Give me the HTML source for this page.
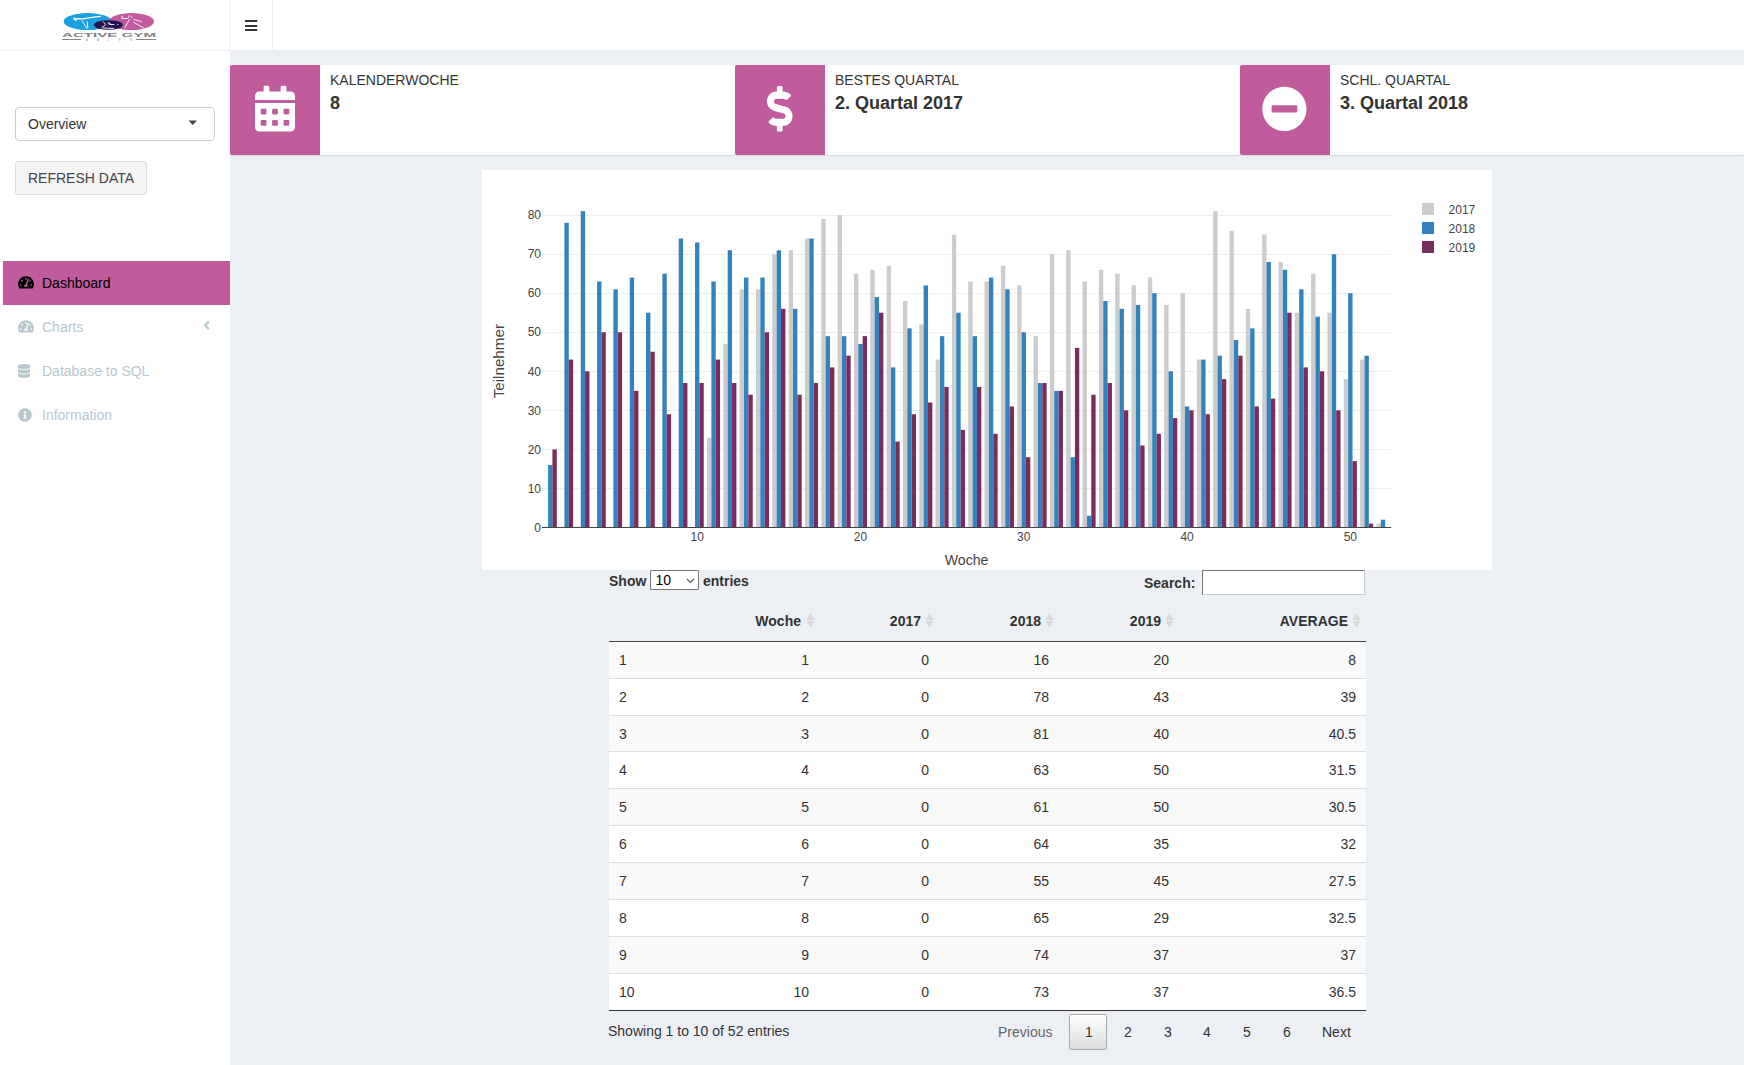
<!DOCTYPE html>
<html><head><meta charset="utf-8">
<style>
*{box-sizing:border-box;margin:0;padding:0}
html,body{width:1744px;height:1065px;overflow:hidden}
body{font-family:"Liberation Sans",sans-serif;font-size:14px;line-height:16px;color:#333;background:#ecf0f5;position:relative}
.abs{position:absolute}
#hdr{left:0;top:0;width:1744px;height:50px;background:#fff}
#logo{left:0;top:0;width:230px;height:51px;background:#fff;border-bottom:1px solid #eeeeee}
#toggle{left:229px;top:0;width:44px;height:50px;border-left:1px solid #eee;border-right:1px solid #eee}
#side{left:0;top:51px;width:230px;height:1014px;background:#fff}
.sel{left:15px;top:107px;width:200px;height:34px;border:1px solid #ccc;border-radius:4px;background:#fff}
.sel span{position:absolute;left:12px;top:8px;color:#333}
.btn{left:15px;top:161px;width:132px;height:34px;border:1px solid #ddd;border-radius:3px;background:#f4f4f4}
.btn span{position:absolute;left:12px;top:8px;color:#444}
.menu{left:0;width:230px;height:44px}
.menu span{position:absolute;left:42px;top:14px;color:#b8c7ce}
.menu.act{left:3px;width:227px;background:#c05b9c}
.menu.act span{left:39px;color:#000}
.menu svg{position:absolute}
.ib{top:65px;height:90px;background:#fff;box-shadow:0 1px 1px rgba(0,0,0,.1);border-radius:2px}
.ib .ic{position:absolute;left:0;top:0;width:90px;height:90px;background:#c05b9c;border-radius:2px 0 0 2px}
.ib .ic svg{position:absolute;left:0;top:0}
.ib .t{position:absolute;left:100px;top:7px;font-size:14px;color:#333;text-transform:uppercase}
.ib .v{position:absolute;left:100px;top:28px;font-size:18px;line-height:20px;font-weight:bold;color:#333}
#chart{left:482px;top:170px;width:1010px;height:400px;background:#fff}
.tr{left:609px;width:757px}
.td{color:#333;white-space:nowrap}
.th{font-weight:bold;color:#333;top:613px;white-space:nowrap}
.sort{position:absolute;width:9px;height:16px}
.pg{top:1024px;color:#333}
</style></head><body>
<div id="hdr" class="abs"></div>
<div id="logo" class="abs">
<svg class="abs" style="left:0;top:0" width="230" height="50">
<ellipse cx="87.7" cy="21.6" rx="24" ry="8.5" fill="#1a9fe0"/>
<ellipse cx="131.5" cy="21.6" rx="22.5" ry="8.5" fill="#c25a9e"/>
<ellipse cx="108.5" cy="25" rx="14.5" ry="4.8" fill="#22124f"/>
<g stroke="#fff" fill="none" stroke-linecap="round" stroke-linejoin="round">
<path stroke-width="1.3" d="M74 19 L78 18.6 L83 18.8 L90 17.6 L100.4 16.4"/>
<path stroke-width="1.4" d="M74.5 18 L76 20.5"/>
<path stroke-width="0.9" d="M82.1 20.7 L86.7 28.2 M87.2 21.6 L87.8 27.9"/>
<path stroke-width="0.9" d="M103.2 21.7 L105.7 24.5 L101.8 27.7 M103 28 L113.9 28.4 M110 24.5 L113.9 24.5"/>
<circle cx="108.9" cy="23.4" r="0.9" stroke-width="0.7"/>
<circle cx="117.8" cy="24.5" r="0.3" fill="#fff" stroke-width="0.4"/>
<path stroke-width="0.9" d="M122.1 16 L122.1 18.5 L127.8 18.5 L129.5 15.6 M129.5 19.5 L124.9 27.4 M133.8 22.4 L143.4 27.7 M133.8 19.5 L141.6 21.7"/>
<circle cx="131.7" cy="17" r="0.4" fill="#fff" stroke-width="0.4"/>
</g>
<text x="62" y="37" font-family="Liberation Sans, sans-serif" font-weight="bold" font-size="5.6" fill="#7d7d7d" textLength="94" lengthAdjust="spacingAndGlyphs">ACTIVE GYM</text>
<rect x="62" y="39" width="19" height="1" fill="#888"/>
<rect x="136" y="39" width="20" height="1" fill="#888"/>
<text x="86" y="41" font-family="Liberation Sans, sans-serif" font-size="3" fill="#999" textLength="46" lengthAdjust="spacing">AALEN</text>
</svg>
</div>
<div id="toggle" class="abs">
<svg class="abs" style="left:14px;top:0" width="14" height="50"><rect x="1" y="20" width="12.25" height="2" rx="0.5" fill="#333"/><rect x="1" y="25" width="12.25" height="2" rx="0.5" fill="#333"/><rect x="1" y="29" width="12.25" height="2" rx="0.5" fill="#333"/></svg>
</div>
<div id="side" class="abs"></div>
<div class="abs sel"><span>Overview</span><svg class="abs" style="left:172px;top:12px" width="10" height="6"><path d="M0.5 0.5 L9 0.5 L4.75 5 Z" fill="#444"/></svg></div>
<div class="abs btn"><span>REFRESH DATA</span></div>
<div class="abs menu act" style="top:261px"><svg style="left:15px;top:15px" width="16" height="14" viewBox="0 0 576 512"><path transform="translate(0,-20)" fill="#000" d="M288 32C128.94 32 0 160.94 0 320c0 52.8 14.25 102.26 39.06 144.8 5.610 9.62 16.3 15.2 27.44 15.2h443c11.14 0 21.83-5.58 27.44-15.2C561.750 422.26 576 372.8 576 320c0-159.06-128.94-288-288-288zm0 64c14.71 0 26.58 10.13 30.32 23.65-1.11 2.26-2.64 4.23-3.45 6.67l-9.22 27.67c-5.13 3.49-10.97 6.01-17.640 6.01-17.67 0-32-14.33-32-32S270.33 96 288 96zM96 384c-17.67 0-32-14.33-32-32s14.33-32 32-32 32 14.33 32 32-14.33 32-32 32zm48-160c-17.67 0-32-14.33-32-32s14.33-32 32-32 32 14.33 32 32-14.33 32-32 32zm246.77-72.41l-61.33 184C343.13 347.33 352 364.54 352 384c0 11.72-3.38 22.55-8.88 32H232.88c-5.5-9.45-8.88-20.28-8.88-32 0-33.94 26.5-61.43 59.9-63.59l61.34-184.01c4.17-12.56 17.73-19.45 30.36-15.17 12.57 4.19 19.35 17.79 15.17 30.36zm14.66 57.2l15.52-46.55c3.47-1.29 7.13-2.23 11.05-2.230 17.67 0 32 14.33 32 32s-14.33 32-32 32c-11.38-.01-20.89-6.3-26.57-15.22zM480 384c-17.67 0-32-14.33-32-32s14.33-32 32-32 32 14.33 32 32-14.33 32-32 32z"/></svg><span>Dashboard</span></div>
<div class="abs menu" style="top:305px"><svg style="left:18px;top:15px" width="16" height="14" viewBox="0 0 576 512"><path transform="translate(0,-20)" fill="#b8c7ce" d="M288 32C128.94 32 0 160.94 0 320c0 52.8 14.25 102.26 39.06 144.8 5.610 9.62 16.3 15.2 27.44 15.2h443c11.14 0 21.830-5.58 27.44-15.2C561.75 422.26 576 372.8 576 320c0-159.06-128.94-288-288-288zm0 64c14.71 0 26.58 10.13 30.32 23.65-1.11 2.26-2.64 4.23-3.45 6.67l-9.22 27.67c-5.13 3.49-10.97 6.01-17.64 6.01-17.67 0-32-14.33-32-32S270.33 96 288 96zM96 384c-17.67 0-32-14.33-32-32s14.33-32 32-32 32 14.33 32 32-14.33 32-32 32zm48-160c-17.67 0-32-14.33-32-32s14.33-32 32-32 32 14.33 32 32-14.33 32-32 32zm246.77-72.41l-61.33 184C343.13 347.33 352 364.54 352 384c0 11.72-3.38 22.55-8.88 32H232.88c-5.5-9.45-8.88-20.28-8.88-32 0-33.94 26.5-61.43 59.9-63.59l61.34-184.01c4.17-12.56 17.73-19.45 30.36-15.17 12.57 4.19 19.35 17.79 15.17 30.36zm14.66 57.2l15.52-46.55c3.47-1.29 7.13-2.23 11.05-2.23 17.67 0 32 14.33 32 32s-14.33 32-32 32c-11.38-.01-20.89-6.3-26.57-15.22zM480 384c-17.67 0-32-14.33-32-32s14.33-32 32-32 32 14.33 32 32-14.33 32-32 32z"/></svg><span>Charts</span>
<svg style="left:203px;top:13.3px" width="7.2" height="14.4" viewBox="0 0 256 512"><path fill="#b8c7ce" d="M31.7 239l136-136c9.4-9.4 24.6-9.4 33.9 0l22.6 22.6c9.4 9.4 9.4 24.6 0 33.9L127.9 256l96.4 96.4c9.4 9.4 9.4 24.6 0 33.9L201.7 409c-9.4 9.4-24.6 9.4-33.9 0l-136-136c-9.5-9.4-9.5-24.6-.1-34z"/></svg></div>
<div class="abs menu" style="top:349px"><svg style="left:18px;top:15px" width="12.25" height="14" viewBox="0 0 448 512"><path fill="#b8c7ce" d="M448 73.143v45.714C448 159.143 347.667 192 224 192S0 159.143 0 118.857V73.143C0 32.857 100.333 0 224 0s224 32.857 224 73.143zM448 176v102.857C448 319.143 347.667 352 224 352S0 319.143 0 278.857V176c48.125 33.143 136.208 48.572 224 48.572S399.874 209.143 448 176zm0 160v102.857C448 479.143 347.667 512 224 512S0 479.143 0 438.857V336c48.125 33.143 136.208 48.572 224 48.572S399.874 369.143 448 336z"/></svg><span>Database to SQL</span></div>
<div class="abs menu" style="top:393px"><svg style="left:18px;top:15px" width="14" height="14" viewBox="0 0 512 512"><path fill="#b8c7ce" d="M256 8C119.043 8 8 119.083 8 256c0 136.997 111.043 248 248 248s248-111.003 248-248C504 119.083 392.957 8 256 8zm0 110c23.196 0 42 18.804 42 42s-18.804 42-42 42-42-18.804-42-42 18.804-42 42-42zm56 254c0 6.627-5.373 12-12 12h-88c-6.627 0-12-5.373-12-12v-24c0-6.627 5.373-12 12-12h12v-64h-12c-6.627 0-12-5.373-12-12v-24c0-6.627 5.373-12 12-12h64c6.627 0 12 5.373 12 12v100h12c6.627 0 12 5.373 12 12v24z"/></svg><span>Information</span></div>

<div class="abs ib" style="left:230px;width:505px"><div class="ic"><svg width="90" height="90"><g transform="translate(25,20.8) scale(0.0893)"><path fill="#fff" d="M0 464c0 26.5 21.5 48 48 48h352c26.5 0 48-21.5 48-48V192H0v272zm320-196c0-6.6 5.4-12 12-12h40c6.6 0 12 5.4 12 12v40c0 6.6-5.4 12-12 12h-40c-6.6 0-12-5.4-12-12v-40zm0 128c0-6.6 5.4-12 12-12h40c6.6 0 12 5.4 12 12v40c0 6.6-5.4 12-12 12h-40c-6.6 0-12-5.4-12-12v-40zM192 268c0-6.6 5.4-12 12-12h40c6.6 0 12 5.4 12 12v40c0 6.6-5.4 12-12 12h-40c-6.6 0-12-5.4-12-12v-40zm0 128c0-6.6 5.4-12 12-12h40c6.6 0 12 5.4 12 12v40c0 6.6-5.4 12-12 12h-40c-6.6 0-12-5.4-12-12v-40zM64 268c0-6.6 5.4-12 12-12h40c6.6 0 12 5.4 12 12v40c0 6.6-5.4 12-12 12H76c-6.6 0-12-5.4-12-12v-40zm0 128c0-6.6 5.4-12 12-12h40c6.6 0 12 5.4 12 12v40c0 6.6-5.4 12-12 12H76c-6.6 0-12-5.4-12-12v-40zM400 64h-48V16c0-8.8-7.2-16-16-16h-32c-8.8 0-16 7.2-16 16v48H160V16c0-8.8-7.2-16-16-16h-32c-8.8 0-16 7.2-16 16v48H48C21.5 64 0 85.5 0 112v48h448v-48c0-26.5-21.5-48-48-48z"/></g></svg></div><div class="t">Kalenderwoche</div><div class="v">8</div></div>
<div class="abs ib" style="left:735px;width:505px"><div class="ic"><svg width="90" height="90"><g transform="translate(31.9,20.9) scale(0.0893)"><path fill="#fff" d="M209.2 233.4l-108-31.6C88.7 198.2 80 186.5 80 173.5c0-16.3 13.2-29.5 29.5-29.5h66.3c12.2 0 24.2 3.7 34.2 10.5 6.1 4.1 14.3 3.1 19.5-2l34.8-34c7.1-6.9 6.1-18.4-1.8-24.5C238 74.8 207.4 64.1 176 64V16c0-8.8-7.2-16-16-16h-32c-8.8 0-16 7.2-16 16v48h-2.5C45.8 64-5.4 118.7.5 183.6c4.2 46.1 39.4 83.6 83.8 96.6l102.5 30c12.5 3.7 21.2 15.3 21.2 28.3 0 16.3-13.2 29.5-29.5 29.5h-66.3C100 368 88 364.3 78 357.5c-6.1-4.1-14.3-3.1-19.5 2l-34.8 34c-7.1 6.9-6.1 18.4 1.8 24.5 24.5 19.2 55.1 29.9 86.5 30v48c0 8.8 7.2 16 16 16h32c8.8 0 16-7.2 16-16v-48.2c46.6-.9 90.3-28.6 105.7-72.7 21.5-61.6-14.6-124.8-72.5-141.7z"/></g></svg></div><div class="t">Bestes Quartal</div><div class="v">2. Quartal 2017</div></div>
<div class="abs ib" style="left:1240px;width:504px"><div class="ic"><svg width="90" height="90"><g transform="translate(21.6,21.1) scale(0.0891)"><path fill="#fff" d="M256 8C119 8 8 119 8 256s111 248 248 248 248-111 248-248S393 8 256 8zM124 296c-6.6 0-12-5.4-12-12v-56c0-6.6 5.4-12 12-12h264c6.6 0 12 5.4 12 12v56c0 6.6-5.4 12-12 12H124z"/></g></svg></div><div class="t">Schl. Quartal</div><div class="v">3. Quartal 2018</div></div>

<div id="chart" class="abs"></div>
<svg class="abs" style="left:482px;top:170px" width="1010" height="400" font-family="Liberation Sans, sans-serif" font-size="12" fill="#444"><line x1="60.10" x2="909.16" y1="318.50" y2="318.50" stroke="#eeeeee" stroke-width="1"/><line x1="60.10" x2="909.16" y1="279.50" y2="279.50" stroke="#eeeeee" stroke-width="1"/><line x1="60.10" x2="909.16" y1="240.50" y2="240.50" stroke="#eeeeee" stroke-width="1"/><line x1="60.10" x2="909.16" y1="201.50" y2="201.50" stroke="#eeeeee" stroke-width="1"/><line x1="60.10" x2="909.16" y1="162.50" y2="162.50" stroke="#eeeeee" stroke-width="1"/><line x1="60.10" x2="909.16" y1="123.50" y2="123.50" stroke="#eeeeee" stroke-width="1"/><line x1="60.10" x2="909.16" y1="84.50" y2="84.50" stroke="#eeeeee" stroke-width="1"/><line x1="60.10" x2="909.16" y1="45.50" y2="45.50" stroke="#eeeeee" stroke-width="1"/><rect x="66.09" y="295.02" width="4.35" height="62.48" fill="#3182bd"/><rect x="70.44" y="279.40" width="4.35" height="78.10" fill="#7b2c5f"/><rect x="82.41" y="52.91" width="4.35" height="304.59" fill="#3182bd"/><rect x="86.77" y="189.59" width="4.35" height="167.91" fill="#7b2c5f"/><rect x="98.74" y="41.19" width="4.35" height="316.31" fill="#3182bd"/><rect x="103.10" y="201.30" width="4.35" height="156.20" fill="#7b2c5f"/><rect x="115.07" y="111.49" width="4.35" height="246.01" fill="#3182bd"/><rect x="119.43" y="162.25" width="4.35" height="195.25" fill="#7b2c5f"/><rect x="131.40" y="119.30" width="4.35" height="238.20" fill="#3182bd"/><rect x="135.75" y="162.25" width="4.35" height="195.25" fill="#7b2c5f"/><rect x="147.73" y="107.58" width="4.35" height="249.92" fill="#3182bd"/><rect x="152.08" y="220.83" width="4.35" height="136.67" fill="#7b2c5f"/><rect x="164.05" y="142.73" width="4.35" height="214.77" fill="#3182bd"/><rect x="168.41" y="181.77" width="4.35" height="175.72" fill="#7b2c5f"/><rect x="180.38" y="103.68" width="4.35" height="253.82" fill="#3182bd"/><rect x="184.74" y="244.25" width="4.35" height="113.24" fill="#7b2c5f"/><rect x="196.71" y="68.53" width="4.35" height="288.97" fill="#3182bd"/><rect x="201.07" y="213.01" width="4.35" height="144.48" fill="#7b2c5f"/><rect x="213.04" y="72.44" width="4.35" height="285.06" fill="#3182bd"/><rect x="217.39" y="213.01" width="4.35" height="144.48" fill="#7b2c5f"/><rect x="225.01" y="267.69" width="4.35" height="89.81" fill="#cccccc"/><rect x="229.37" y="111.49" width="4.35" height="246.01" fill="#3182bd"/><rect x="233.72" y="189.59" width="4.35" height="167.91" fill="#7b2c5f"/><rect x="241.34" y="173.97" width="4.35" height="183.53" fill="#cccccc"/><rect x="245.69" y="80.25" width="4.35" height="277.25" fill="#3182bd"/><rect x="250.05" y="213.01" width="4.35" height="144.48" fill="#7b2c5f"/><rect x="257.67" y="119.30" width="4.35" height="238.20" fill="#cccccc"/><rect x="262.02" y="107.58" width="4.35" height="249.92" fill="#3182bd"/><rect x="266.38" y="224.73" width="4.35" height="132.77" fill="#7b2c5f"/><rect x="274.00" y="119.30" width="4.35" height="238.20" fill="#cccccc"/><rect x="278.35" y="107.58" width="4.35" height="249.92" fill="#3182bd"/><rect x="282.71" y="162.25" width="4.35" height="195.25" fill="#7b2c5f"/><rect x="290.32" y="84.15" width="4.35" height="273.35" fill="#cccccc"/><rect x="294.68" y="80.25" width="4.35" height="277.25" fill="#3182bd"/><rect x="299.03" y="138.82" width="4.35" height="218.68" fill="#7b2c5f"/><rect x="306.65" y="80.25" width="4.35" height="277.25" fill="#cccccc"/><rect x="311.01" y="138.82" width="4.35" height="218.68" fill="#3182bd"/><rect x="315.36" y="224.73" width="4.35" height="132.77" fill="#7b2c5f"/><rect x="322.98" y="68.53" width="4.35" height="288.97" fill="#cccccc"/><rect x="327.33" y="68.53" width="4.35" height="288.97" fill="#3182bd"/><rect x="331.69" y="213.01" width="4.35" height="144.48" fill="#7b2c5f"/><rect x="339.31" y="49.00" width="4.35" height="308.50" fill="#cccccc"/><rect x="343.66" y="166.15" width="4.35" height="191.34" fill="#3182bd"/><rect x="348.02" y="197.39" width="4.35" height="160.10" fill="#7b2c5f"/><rect x="355.64" y="45.10" width="4.35" height="312.40" fill="#cccccc"/><rect x="359.99" y="166.15" width="4.35" height="191.34" fill="#3182bd"/><rect x="364.35" y="185.68" width="4.35" height="171.82" fill="#7b2c5f"/><rect x="371.96" y="103.68" width="4.35" height="253.82" fill="#cccccc"/><rect x="376.32" y="173.97" width="4.35" height="183.53" fill="#3182bd"/><rect x="380.67" y="166.15" width="4.35" height="191.34" fill="#7b2c5f"/><rect x="388.29" y="99.77" width="4.35" height="257.73" fill="#cccccc"/><rect x="392.65" y="127.11" width="4.35" height="230.39" fill="#3182bd"/><rect x="397.00" y="142.73" width="4.35" height="214.77" fill="#7b2c5f"/><rect x="404.62" y="95.87" width="4.35" height="261.63" fill="#cccccc"/><rect x="408.97" y="197.39" width="4.35" height="160.10" fill="#3182bd"/><rect x="413.33" y="271.59" width="4.35" height="85.91" fill="#7b2c5f"/><rect x="420.95" y="131.01" width="4.35" height="226.49" fill="#cccccc"/><rect x="425.30" y="158.35" width="4.35" height="199.16" fill="#3182bd"/><rect x="429.66" y="244.25" width="4.35" height="113.24" fill="#7b2c5f"/><rect x="437.28" y="154.44" width="4.35" height="203.06" fill="#cccccc"/><rect x="441.63" y="115.39" width="4.35" height="242.11" fill="#3182bd"/><rect x="445.99" y="232.54" width="4.35" height="124.96" fill="#7b2c5f"/><rect x="453.60" y="189.59" width="4.35" height="167.91" fill="#cccccc"/><rect x="457.96" y="166.15" width="4.35" height="191.34" fill="#3182bd"/><rect x="462.31" y="216.92" width="4.35" height="140.58" fill="#7b2c5f"/><rect x="469.93" y="64.62" width="4.35" height="292.88" fill="#cccccc"/><rect x="474.29" y="142.73" width="4.35" height="214.77" fill="#3182bd"/><rect x="478.64" y="259.88" width="4.35" height="97.62" fill="#7b2c5f"/><rect x="486.26" y="111.49" width="4.35" height="246.01" fill="#cccccc"/><rect x="490.61" y="166.15" width="4.35" height="191.34" fill="#3182bd"/><rect x="494.97" y="216.92" width="4.35" height="140.58" fill="#7b2c5f"/><rect x="502.59" y="111.49" width="4.35" height="246.01" fill="#cccccc"/><rect x="506.94" y="107.58" width="4.35" height="249.92" fill="#3182bd"/><rect x="511.30" y="263.78" width="4.35" height="93.72" fill="#7b2c5f"/><rect x="518.92" y="95.87" width="4.35" height="261.63" fill="#cccccc"/><rect x="523.27" y="119.30" width="4.35" height="238.20" fill="#3182bd"/><rect x="527.63" y="236.44" width="4.35" height="121.05" fill="#7b2c5f"/><rect x="535.24" y="115.39" width="4.35" height="242.11" fill="#cccccc"/><rect x="539.60" y="162.25" width="4.35" height="195.25" fill="#3182bd"/><rect x="543.95" y="287.21" width="4.35" height="70.29" fill="#7b2c5f"/><rect x="551.57" y="166.15" width="4.35" height="191.34" fill="#cccccc"/><rect x="555.93" y="213.01" width="4.35" height="144.48" fill="#3182bd"/><rect x="560.28" y="213.01" width="4.35" height="144.48" fill="#7b2c5f"/><rect x="567.90" y="84.15" width="4.35" height="273.35" fill="#cccccc"/><rect x="572.25" y="220.83" width="4.35" height="136.67" fill="#3182bd"/><rect x="576.61" y="220.83" width="4.35" height="136.67" fill="#7b2c5f"/><rect x="584.23" y="80.25" width="4.35" height="277.25" fill="#cccccc"/><rect x="588.58" y="287.21" width="4.35" height="70.29" fill="#3182bd"/><rect x="592.94" y="177.87" width="4.35" height="179.63" fill="#7b2c5f"/><rect x="600.56" y="111.49" width="4.35" height="246.01" fill="#cccccc"/><rect x="604.91" y="345.78" width="4.35" height="11.71" fill="#3182bd"/><rect x="609.27" y="224.73" width="4.35" height="132.77" fill="#7b2c5f"/><rect x="616.88" y="99.77" width="4.35" height="257.73" fill="#cccccc"/><rect x="621.24" y="131.01" width="4.35" height="226.49" fill="#3182bd"/><rect x="625.59" y="213.01" width="4.35" height="144.48" fill="#7b2c5f"/><rect x="633.21" y="103.68" width="4.35" height="253.82" fill="#cccccc"/><rect x="637.57" y="138.82" width="4.35" height="218.68" fill="#3182bd"/><rect x="641.92" y="240.35" width="4.35" height="117.15" fill="#7b2c5f"/><rect x="649.54" y="115.39" width="4.35" height="242.11" fill="#cccccc"/><rect x="653.89" y="134.92" width="4.35" height="222.58" fill="#3182bd"/><rect x="658.25" y="275.50" width="4.35" height="82.00" fill="#7b2c5f"/><rect x="665.87" y="107.58" width="4.35" height="249.92" fill="#cccccc"/><rect x="670.22" y="123.20" width="4.35" height="234.30" fill="#3182bd"/><rect x="674.58" y="263.78" width="4.35" height="93.72" fill="#7b2c5f"/><rect x="682.20" y="134.92" width="4.35" height="222.58" fill="#cccccc"/><rect x="686.55" y="201.30" width="4.35" height="156.20" fill="#3182bd"/><rect x="690.91" y="248.16" width="4.35" height="109.34" fill="#7b2c5f"/><rect x="698.52" y="123.20" width="4.35" height="234.30" fill="#cccccc"/><rect x="702.88" y="236.44" width="4.35" height="121.05" fill="#3182bd"/><rect x="707.23" y="240.35" width="4.35" height="117.15" fill="#7b2c5f"/><rect x="714.85" y="189.59" width="4.35" height="167.91" fill="#cccccc"/><rect x="719.21" y="189.59" width="4.35" height="167.91" fill="#3182bd"/><rect x="723.56" y="244.25" width="4.35" height="113.24" fill="#7b2c5f"/><rect x="731.18" y="41.19" width="4.35" height="316.31" fill="#cccccc"/><rect x="735.53" y="185.68" width="4.35" height="171.82" fill="#3182bd"/><rect x="739.89" y="209.11" width="4.35" height="148.39" fill="#7b2c5f"/><rect x="747.51" y="60.72" width="4.35" height="296.78" fill="#cccccc"/><rect x="751.86" y="170.06" width="4.35" height="187.44" fill="#3182bd"/><rect x="756.22" y="185.68" width="4.35" height="171.82" fill="#7b2c5f"/><rect x="763.84" y="138.82" width="4.35" height="218.68" fill="#cccccc"/><rect x="768.19" y="158.35" width="4.35" height="199.16" fill="#3182bd"/><rect x="772.55" y="236.44" width="4.35" height="121.05" fill="#7b2c5f"/><rect x="780.16" y="64.62" width="4.35" height="292.88" fill="#cccccc"/><rect x="784.52" y="91.96" width="4.35" height="265.54" fill="#3182bd"/><rect x="788.87" y="228.63" width="4.35" height="128.86" fill="#7b2c5f"/><rect x="796.49" y="91.96" width="4.35" height="265.54" fill="#cccccc"/><rect x="800.85" y="99.77" width="4.35" height="257.73" fill="#3182bd"/><rect x="805.20" y="142.73" width="4.35" height="214.77" fill="#7b2c5f"/><rect x="812.82" y="142.73" width="4.35" height="214.77" fill="#cccccc"/><rect x="817.17" y="119.30" width="4.35" height="238.20" fill="#3182bd"/><rect x="821.53" y="197.39" width="4.35" height="160.10" fill="#7b2c5f"/><rect x="829.15" y="103.68" width="4.35" height="253.82" fill="#cccccc"/><rect x="833.50" y="146.63" width="4.35" height="210.87" fill="#3182bd"/><rect x="837.86" y="201.30" width="4.35" height="156.20" fill="#7b2c5f"/><rect x="845.48" y="142.73" width="4.35" height="214.77" fill="#cccccc"/><rect x="849.83" y="84.15" width="4.35" height="273.35" fill="#3182bd"/><rect x="854.19" y="240.35" width="4.35" height="117.15" fill="#7b2c5f"/><rect x="861.80" y="209.11" width="4.35" height="148.39" fill="#cccccc"/><rect x="866.16" y="123.20" width="4.35" height="234.30" fill="#3182bd"/><rect x="870.51" y="291.12" width="4.35" height="66.38" fill="#7b2c5f"/><rect x="878.13" y="189.59" width="4.35" height="167.91" fill="#cccccc"/><rect x="882.49" y="185.68" width="4.35" height="171.82" fill="#3182bd"/><rect x="886.84" y="353.60" width="4.35" height="3.90" fill="#7b2c5f"/><rect x="894.46" y="353.60" width="4.35" height="3.90" fill="#cccccc"/><rect x="898.81" y="349.69" width="4.35" height="7.81" fill="#3182bd"/><line x1="60.10" x2="909.16" y1="357.50" y2="357.50" stroke="#444" stroke-width="1"/><text x="59" y="361.70" text-anchor="end">0</text><text x="59" y="322.65" text-anchor="end">10</text><text x="59" y="283.60" text-anchor="end">20</text><text x="59" y="244.55" text-anchor="end">30</text><text x="59" y="205.50" text-anchor="end">40</text><text x="59" y="166.45" text-anchor="end">50</text><text x="59" y="127.40" text-anchor="end">60</text><text x="59" y="88.35" text-anchor="end">70</text><text x="59" y="49.30" text-anchor="end">80</text><text x="215.22" y="371.00" text-anchor="middle">10</text><text x="378.50" y="371.00" text-anchor="middle">20</text><text x="541.78" y="371.00" text-anchor="middle">30</text><text x="705.06" y="371.00" text-anchor="middle">40</text><text x="868.34" y="371.00" text-anchor="middle">50</text><text x="484.6" y="394.70000000000005" text-anchor="middle" font-size="14" textLength="43.7" lengthAdjust="spacingAndGlyphs">Woche</text><text transform="translate(22.19999999999999,191.2) rotate(-90)" x="0" y="0" text-anchor="middle" font-size="14" textLength="74.3" lengthAdjust="spacingAndGlyphs">Teilnehmer</text><rect x="940" y="33" width="12" height="12" fill="#cccccc"/><text x="966.5999999999999" y="44.2">2017</text><rect x="940" y="52" width="12" height="12" fill="#3182bd"/><text x="966.5999999999999" y="63.2">2018</text><rect x="940" y="71" width="12" height="12" fill="#7b2c5f"/><text x="966.5999999999999" y="82.2">2019</text></svg>

<div class="abs" style="left:609px;top:573px;font-weight:bold">Show</div>
<div class="abs" style="left:650px;top:570px;width:49px;height:20px;border:1px solid #767676;border-radius:1px;background:#fff"><span class="abs" style="left:4.5px;top:1px;color:#000">10</span><svg class="abs" style="left:35px;top:7px" width="10" height="6"><path d="M1 1 L4.5 4.5 L8 1" stroke="#555" stroke-width="1.1" fill="none"/></svg></div>
<div class="abs" style="left:703px;top:573px;font-weight:bold">entries</div>
<div class="abs" style="left:1144px;top:575px;font-weight:bold">Search:</div>
<div class="abs" style="left:1202px;top:570px;width:163px;height:25px;background:#fff;border-top:1px solid #767676;border-left:1px solid #767676;border-bottom:1px solid #ccc;border-right:1px solid #ccc"></div>

<div class="abs" style="left:609px;top:641px;width:757px;height:1px;background:#444"></div>
<div class="abs th" style="right:943px">Woche</div>
<div class="abs th" style="right:823px">2017</div>
<div class="abs th" style="right:703px">2018</div>
<div class="abs th" style="right:583px">2019</div>
<div class="abs th" style="right:396px">AVERAGE</div>
<svg class="abs" style="left:806px;top:612px" width="9" height="17"><path d="M4.5 1 L8.5 8 L0.5 8 Z" fill="#d9d9d9"/><path d="M0.5 9 L8.5 9 L4.5 16 Z" fill="#d9d9d9"/></svg><svg class="abs" style="left:925px;top:612px" width="9" height="17"><path d="M4.5 1 L8.5 8 L0.5 8 Z" fill="#d9d9d9"/><path d="M0.5 9 L8.5 9 L4.5 16 Z" fill="#d9d9d9"/></svg><svg class="abs" style="left:1045px;top:612px" width="9" height="17"><path d="M4.5 1 L8.5 8 L0.5 8 Z" fill="#d9d9d9"/><path d="M0.5 9 L8.5 9 L4.5 16 Z" fill="#d9d9d9"/></svg><svg class="abs" style="left:1165px;top:612px" width="9" height="17"><path d="M4.5 1 L8.5 8 L0.5 8 Z" fill="#d9d9d9"/><path d="M0.5 9 L8.5 9 L4.5 16 Z" fill="#d9d9d9"/></svg><svg class="abs" style="left:1352px;top:612px" width="9" height="17"><path d="M4.5 1 L8.5 8 L0.5 8 Z" fill="#d9d9d9"/><path d="M0.5 9 L8.5 9 L4.5 16 Z" fill="#d9d9d9"/></svg>
<div class="abs tr" style="top:642px;height:36px;background:#f9f9f9"></div><div class="abs td" style="left:619px;top:652.0px">1</div><div class="abs td" style="right:935px;top:652.0px;text-align:right">1</div><div class="abs td" style="right:815px;top:652.0px;text-align:right">0</div><div class="abs td" style="right:695px;top:652.0px;text-align:right">16</div><div class="abs td" style="right:575px;top:652.0px;text-align:right">20</div><div class="abs td" style="right:388px;top:652.0px;text-align:right">8</div><div class="abs tr" style="top:679px;height:36px;background:#ffffff"></div><div class="abs tr" style="top:678px;height:1px;background:#ddd"></div><div class="abs td" style="left:619px;top:689.0px">2</div><div class="abs td" style="right:935px;top:689.0px;text-align:right">2</div><div class="abs td" style="right:815px;top:689.0px;text-align:right">0</div><div class="abs td" style="right:695px;top:689.0px;text-align:right">78</div><div class="abs td" style="right:575px;top:689.0px;text-align:right">43</div><div class="abs td" style="right:388px;top:689.0px;text-align:right">39</div><div class="abs tr" style="top:716px;height:35px;background:#f9f9f9"></div><div class="abs tr" style="top:715px;height:1px;background:#ddd"></div><div class="abs td" style="left:619px;top:725.5px">3</div><div class="abs td" style="right:935px;top:725.5px;text-align:right">3</div><div class="abs td" style="right:815px;top:725.5px;text-align:right">0</div><div class="abs td" style="right:695px;top:725.5px;text-align:right">81</div><div class="abs td" style="right:575px;top:725.5px;text-align:right">40</div><div class="abs td" style="right:388px;top:725.5px;text-align:right">40.5</div><div class="abs tr" style="top:752px;height:36px;background:#ffffff"></div><div class="abs tr" style="top:751px;height:1px;background:#ddd"></div><div class="abs td" style="left:619px;top:762.0px">4</div><div class="abs td" style="right:935px;top:762.0px;text-align:right">4</div><div class="abs td" style="right:815px;top:762.0px;text-align:right">0</div><div class="abs td" style="right:695px;top:762.0px;text-align:right">63</div><div class="abs td" style="right:575px;top:762.0px;text-align:right">50</div><div class="abs td" style="right:388px;top:762.0px;text-align:right">31.5</div><div class="abs tr" style="top:789px;height:36px;background:#f9f9f9"></div><div class="abs tr" style="top:788px;height:1px;background:#ddd"></div><div class="abs td" style="left:619px;top:799.0px">5</div><div class="abs td" style="right:935px;top:799.0px;text-align:right">5</div><div class="abs td" style="right:815px;top:799.0px;text-align:right">0</div><div class="abs td" style="right:695px;top:799.0px;text-align:right">61</div><div class="abs td" style="right:575px;top:799.0px;text-align:right">50</div><div class="abs td" style="right:388px;top:799.0px;text-align:right">30.5</div><div class="abs tr" style="top:826px;height:36px;background:#ffffff"></div><div class="abs tr" style="top:825px;height:1px;background:#ddd"></div><div class="abs td" style="left:619px;top:836.0px">6</div><div class="abs td" style="right:935px;top:836.0px;text-align:right">6</div><div class="abs td" style="right:815px;top:836.0px;text-align:right">0</div><div class="abs td" style="right:695px;top:836.0px;text-align:right">64</div><div class="abs td" style="right:575px;top:836.0px;text-align:right">35</div><div class="abs td" style="right:388px;top:836.0px;text-align:right">32</div><div class="abs tr" style="top:863px;height:36px;background:#f9f9f9"></div><div class="abs tr" style="top:862px;height:1px;background:#ddd"></div><div class="abs td" style="left:619px;top:873.0px">7</div><div class="abs td" style="right:935px;top:873.0px;text-align:right">7</div><div class="abs td" style="right:815px;top:873.0px;text-align:right">0</div><div class="abs td" style="right:695px;top:873.0px;text-align:right">55</div><div class="abs td" style="right:575px;top:873.0px;text-align:right">45</div><div class="abs td" style="right:388px;top:873.0px;text-align:right">27.5</div><div class="abs tr" style="top:900px;height:36px;background:#ffffff"></div><div class="abs tr" style="top:899px;height:1px;background:#ddd"></div><div class="abs td" style="left:619px;top:910.0px">8</div><div class="abs td" style="right:935px;top:910.0px;text-align:right">8</div><div class="abs td" style="right:815px;top:910.0px;text-align:right">0</div><div class="abs td" style="right:695px;top:910.0px;text-align:right">65</div><div class="abs td" style="right:575px;top:910.0px;text-align:right">29</div><div class="abs td" style="right:388px;top:910.0px;text-align:right">32.5</div><div class="abs tr" style="top:937px;height:36px;background:#f9f9f9"></div><div class="abs tr" style="top:936px;height:1px;background:#ddd"></div><div class="abs td" style="left:619px;top:947.0px">9</div><div class="abs td" style="right:935px;top:947.0px;text-align:right">9</div><div class="abs td" style="right:815px;top:947.0px;text-align:right">0</div><div class="abs td" style="right:695px;top:947.0px;text-align:right">74</div><div class="abs td" style="right:575px;top:947.0px;text-align:right">37</div><div class="abs td" style="right:388px;top:947.0px;text-align:right">37</div><div class="abs tr" style="top:974px;height:36px;background:#ffffff"></div><div class="abs tr" style="top:973px;height:1px;background:#ddd"></div><div class="abs td" style="left:619px;top:984.0px">10</div><div class="abs td" style="right:935px;top:984.0px;text-align:right">10</div><div class="abs td" style="right:815px;top:984.0px;text-align:right">0</div><div class="abs td" style="right:695px;top:984.0px;text-align:right">73</div><div class="abs td" style="right:575px;top:984.0px;text-align:right">37</div><div class="abs td" style="right:388px;top:984.0px;text-align:right">36.5</div>
<div class="abs" style="left:609px;top:1010px;width:757px;height:1px;background:#333"></div>
<div class="abs" style="left:608px;top:1023px">Showing 1 to 10 of 52 entries</div>
<div class="abs pg" style="left:998px;color:#666">Previous</div>
<div class="abs" style="left:1069px;top:1014px;width:38px;height:36px;border:1px solid #a9a9a9;border-radius:2px;background:linear-gradient(to bottom,#fff 0%,#dcdcdc 100%)"></div>
<div class="abs pg" style="left:1085px">1</div>
<div class="abs pg" style="left:1124px">2</div>
<div class="abs pg" style="left:1164px">3</div>
<div class="abs pg" style="left:1203px">4</div>
<div class="abs pg" style="left:1243px">5</div>
<div class="abs pg" style="left:1283px">6</div>
<div class="abs pg" style="left:1322px">Next</div>
</body></html>
